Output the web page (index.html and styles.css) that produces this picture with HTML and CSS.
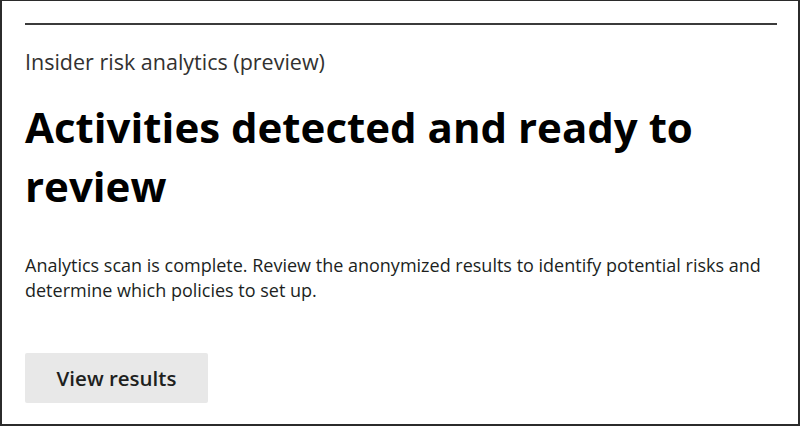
FILE: index.html
```html
<!DOCTYPE html>
<html>
<head>
<meta charset="utf-8">
<link rel="stylesheet" href="styles.css">
</head>
<body>
<div class="frame">
  <div class="card">
    <div class="rule"></div>
    <div class="eyebrow">Insider risk analytics (preview)</div>
    <h1 class="title">Activities detected and ready to review</h1>
    <p class="desc">Analytics scan is complete. Review the anonymized results to identify potential risks and determine which policies to set up.</p>
    <button class="btn">View results</button>
  </div>
</div>
</body>
</html>
```
FILE: styles.css
```css
html, body {
  margin: 0;
  padding: 0;
  background: #ffffff;
}
.frame {
  width: 800px;
  height: 426px;
  box-sizing: border-box;
  border-top: 1px solid #2b2b2b;
  border-left: 2px solid #2b2b2b;
  border-right: 2px solid #2b2b2b;
  border-bottom: 2px solid #2b2b2b;
  overflow: hidden;
}
.card {
  padding: 22px 20px 0 23px;
  font-family: "Open Sans", "Noto Sans", sans-serif;
  color: #201f1e;
}
.rule {
  height: 2px;
  background: #3b3b3b;
  width: 752px;
}
.eyebrow {
  margin-top: 23px;
  font-size: 21.5px;
  line-height: 28px;
  color: #323130;
}
.title {
  margin: 21px 0 0 0;
  font-size: 42px;
  line-height: 59px;
  font-weight: 700;
  color: #000;
  width: 720px;
}
.desc {
  margin: 38px 0 0 0;
  font-size: 18px;
  line-height: 25px;
  color: #201f1e;
  width: 745px;
}
.btn {
  margin-top: 50px;
  width: 183px;
  height: 50px;
  border: none;
  border-radius: 2px;
  background: #e8e8e8;
  font-family: "Open Sans", "Noto Sans", sans-serif;
  font-size: 20.5px;
  font-weight: 600;
  color: #201f1e;
  padding: 0;
}
```
